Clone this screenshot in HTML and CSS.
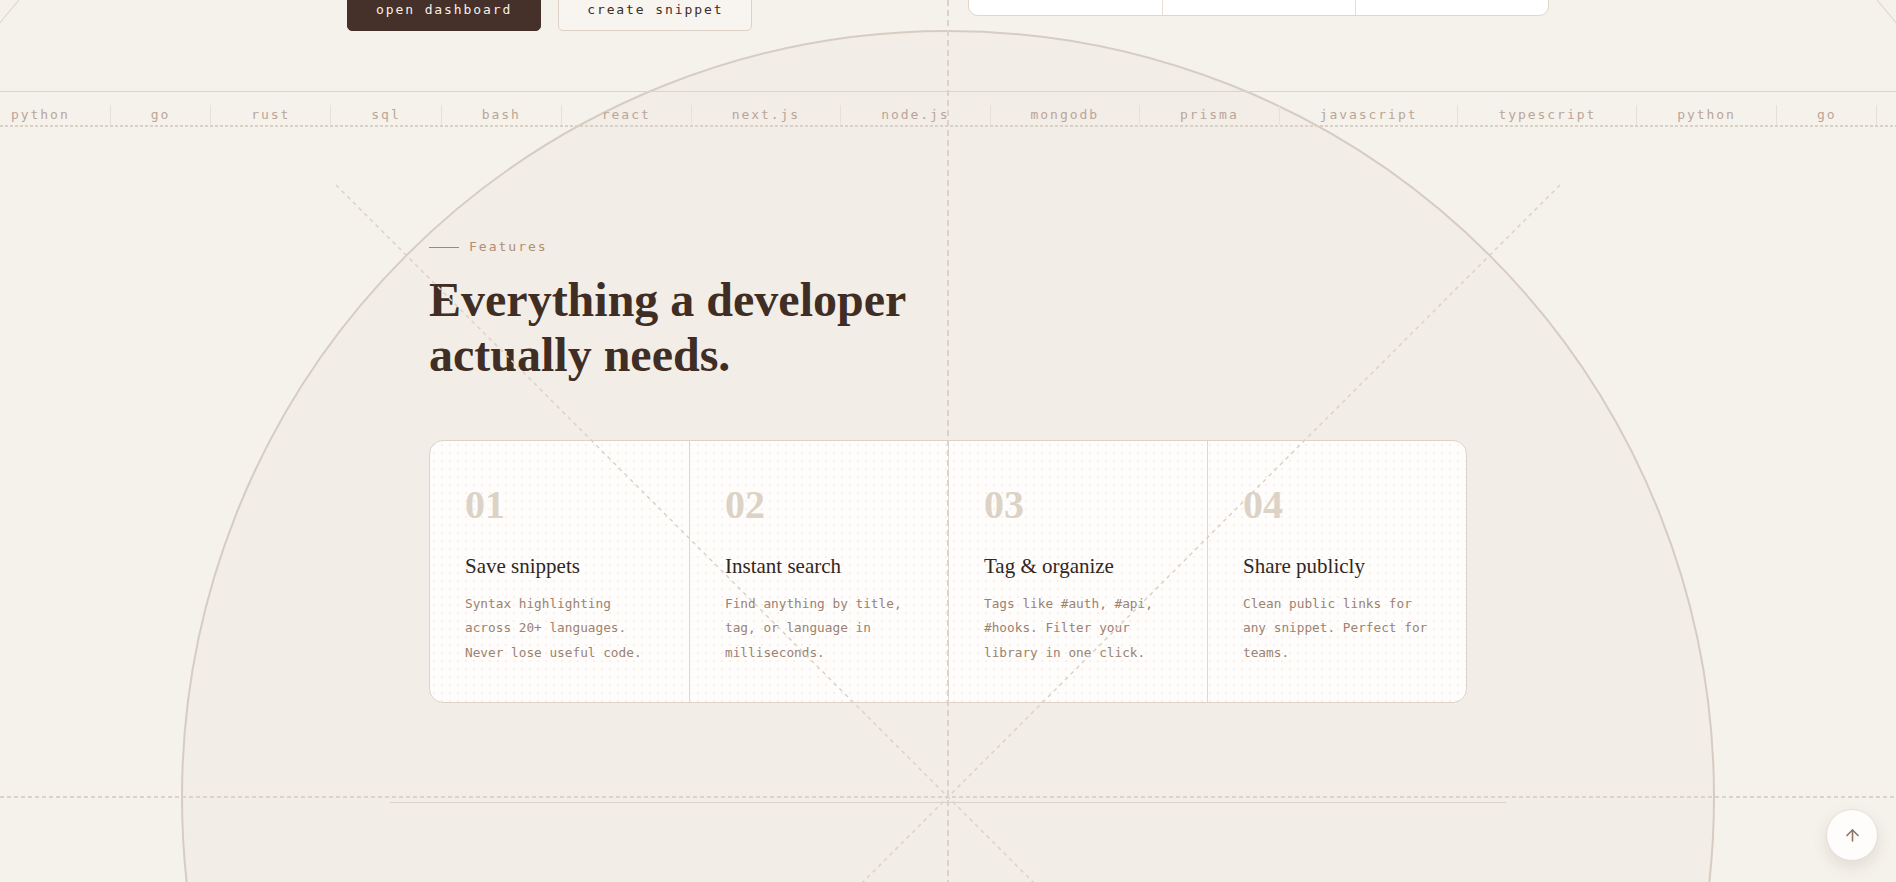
FILE: index.html
```html
<!DOCTYPE html>
<html lang="en">
<head>
<meta charset="utf-8">
<title>Snippets — Features</title>
<link rel="stylesheet" href="styles.css">
</head>
<body>
<svg class="bg-shapes" viewBox="0 0 1896 882" preserveAspectRatio="none" aria-hidden="true">
  <circle cx="948" cy="797" r="1224" fill="none" stroke="#e2d9d0" stroke-width="1.2"/>
  <circle cx="948" cy="797" r="766" fill="#f2ede7" stroke="#d7ccc2" stroke-width="2"/>
  <line x1="390" y1="802.5" x2="1506" y2="802.5" stroke="#dcd1c7" stroke-width="1"/>
</svg>

<main class="page">
  <section class="hero">
    <div class="hero-inner">
      <div class="hero-actions">
        <a class="btn btn-dark" href="#">open dashboard</a>
        <a class="btn btn-light" href="#">create snippet</a>
      </div>
      <div class="hero-stats">
        <div class="stat"></div>
        <div class="stat"></div>
        <div class="stat"></div>
      </div>
    </div>
  </section>

  <div class="ticker">
    <div class="ticker-track">
      <span class="ticker-item">python</span>
      <span class="ticker-item">go</span>
      <span class="ticker-item">rust</span>
      <span class="ticker-item">sql</span>
      <span class="ticker-item">bash</span>
      <span class="ticker-item">react</span>
      <span class="ticker-item">next.js</span>
      <span class="ticker-item">node.js</span>
      <span class="ticker-item">mongodb</span>
      <span class="ticker-item">prisma</span>
      <span class="ticker-item">javascript</span>
      <span class="ticker-item">typescript</span>
      <span class="ticker-item">python</span>
      <span class="ticker-item">go</span>
    </div>
  </div>

  <section class="features">
    <div class="features-inner">
      <div class="eyebrow"><span class="eyebrow-line"></span><span>Features</span></div>
      <h2 class="features-title">Everything a developer<br>actually needs.</h2>
      <div class="feature-grid">
        <article class="feature">
          <div class="feature-num">01</div>
          <h3 class="feature-name">Save snippets</h3>
          <p class="feature-desc">Syntax highlighting across 20+ languages. Never lose useful code.</p>
        </article>
        <article class="feature">
          <div class="feature-num">02</div>
          <h3 class="feature-name">Instant search</h3>
          <p class="feature-desc">Find anything by title, tag, or language in milliseconds.</p>
        </article>
        <article class="feature">
          <div class="feature-num">03</div>
          <h3 class="feature-name">Tag &amp; organize</h3>
          <p class="feature-desc">Tags like #auth, #api, #hooks. Filter your library in one click.</p>
        </article>
        <article class="feature">
          <div class="feature-num">04</div>
          <h3 class="feature-name">Share publicly</h3>
          <p class="feature-desc">Clean public links for any snippet. Perfect for teams.</p>
        </article>
      </div>
    </div>
  </section>
</main>

<svg class="guides" viewBox="0 0 1896 882" preserveAspectRatio="none" aria-hidden="true">
  <line x1="948" y1="0" x2="948" y2="882" stroke="#dcd2c9" stroke-width="2" stroke-dasharray="6 4"/>
  <line x1="0" y1="797" x2="1896" y2="797" stroke="#ddd3ca" stroke-width="2" stroke-dasharray="4 3"/>
  <line x1="336" y1="185" x2="1100" y2="949" stroke="#dcd2c8" stroke-width="1.5" stroke-dasharray="4 4"/>
  <line x1="1560" y1="185" x2="796" y2="949" stroke="#dcd2c8" stroke-width="1.5" stroke-dasharray="4 4"/>
</svg>

<button class="to-top" type="button" aria-label="Back to top">
  <svg viewBox="0 0 24 24" width="19" height="19" fill="none" stroke="#8e7462" stroke-width="2" stroke-linecap="round" stroke-linejoin="round"><path d="M12 19V5"/><path d="M5 12l7-7 7 7"/></svg>
</button>
</body>
</html>
```

FILE: styles.css
```css
html, body {
  margin: 0;
  height: 100%;
  overflow: hidden;
}

body {
  position: relative;
  background: #f5f2ec;
  font-family: "DejaVu Sans Mono", monospace;
  color: #3b2c24;
}

.bg-shapes,
.guides {
  position: absolute;
  top: 0;
  left: 0;
  width: 1896px;
  height: 882px;
  pointer-events: none;
}

.bg-shapes { z-index: 0; }
.guides { z-index: 2; }

.page {
  position: relative;
  z-index: 1;
}

/* ---------- hero (scrolled mostly out of view) ---------- */
.hero {
  margin-top: -66px;
  padding-bottom: 60px;
}

.hero-inner {
  width: 1202px;
  margin: 0 auto;
  display: grid;
  grid-template-columns: 1fr 1fr;
  gap: 40px;
  align-items: end;
}

.hero-actions {
  display: flex;
  gap: 17px;
}

.btn {
  box-sizing: border-box;
  height: 44px;
  display: inline-flex;
  align-items: center;
  padding: 0 28px;
  border: 1px solid transparent;
  border-radius: 5px;
  font-family: "DejaVu Sans Mono", monospace;
  font-size: 13px;
  letter-spacing: 1.9px;
  text-decoration: none;
  white-space: nowrap;
}

.btn-dark {
  background: #45312a;
  border-color: #45312a;
  color: #f7f1e8;
}

.btn-light {
  background: #f8f5f0;
  border-color: #dcd1c7;
  color: #3b2c24;
}

.hero-stats {
  height: 80px;
  margin-bottom: 15px;
  display: grid;
  grid-template-columns: repeat(3, 1fr);
  background: #ffffff;
  border: 1px solid #e0d6cc;
  border-radius: 10px;
  overflow: hidden;
}

.stat + .stat {
  border-left: 1px solid #e6ddd4;
}

/* ---------- ticker ---------- */
.ticker {
  border-top: 1px solid #ddd3c9;
  padding: 13px 0 2px;
  overflow: hidden;
  background-image: repeating-linear-gradient(90deg, #dbd0c6 0 3px, transparent 3px 5px);
  background-size: 100% 2px;
  background-repeat: no-repeat;
  background-position: left bottom;
}

.ticker-track {
  display: flex;
  width: max-content;
  margin-left: -29px;
}

.ticker-item {
  padding: 0 40px;
  border-right: 1px solid #e8e0d7;
  line-height: 20px;
  font-size: 13px;
  letter-spacing: 1.95px;
  color: #bba597;
  white-space: nowrap;
}

/* ---------- features ---------- */
.features {
  padding-top: 111px;
}

.features-inner {
  width: 1038px;
  margin: 0 auto;
}

.eyebrow {
  display: flex;
  align-items: center;
  gap: 10px;
  font-size: 13px;
  line-height: 18px;
  letter-spacing: 2px;
  color: #b08f72;
}

.eyebrow-line {
  width: 30px;
  height: 1px;
  background: #a48672;
}

.features-title {
  margin: 16px 0 58px;
  font-family: "Liberation Serif", "Times New Roman", serif;
  font-weight: 700;
  font-size: 48px;
  line-height: 1.15;
  color: #402d23;
}

.feature-grid {
  display: grid;
  grid-template-columns: repeat(4, 1fr);
  border: 1px solid #ddd2c8;
  border-radius: 14px;
  overflow: hidden;
  background-color: #fefdfb;
  background-image: radial-gradient(circle, #f4f0eb 0.9px, transparent 1.2px);
  background-size: 8px 8px;
}

.feature {
  padding: 42px 35px 37px;
}

.feature + .feature {
  border-left: 1px solid #e0d7cd;
}

.feature-num {
  margin-bottom: 26px;
  font-family: "Liberation Serif", "Times New Roman", serif;
  font-weight: 700;
  font-size: 40px;
  line-height: 1.1;
  color: #ddd2c6;
}

.feature-name {
  margin: 0 0 11px;
  font-family: "Liberation Serif", "Times New Roman", serif;
  font-weight: 400;
  font-size: 21px;
  line-height: 1.3;
  color: #33261d;
}

.feature-desc {
  margin: 0;
  font-size: 12.75px;
  line-height: 24.5px;
  color: #9c8270;
}

/* ---------- back to top ---------- */
.to-top {
  position: fixed;
  right: 18px;
  bottom: 21px;
  z-index: 3;
  width: 52px;
  height: 52px;
  padding: 0;
  display: flex;
  align-items: center;
  justify-content: center;
  background: #fefdfb;
  border: 1px solid #e6ddd4;
  border-radius: 50%;
  box-shadow: 0 6px 16px rgba(90, 60, 40, 0.12);
  cursor: pointer;
}
```
